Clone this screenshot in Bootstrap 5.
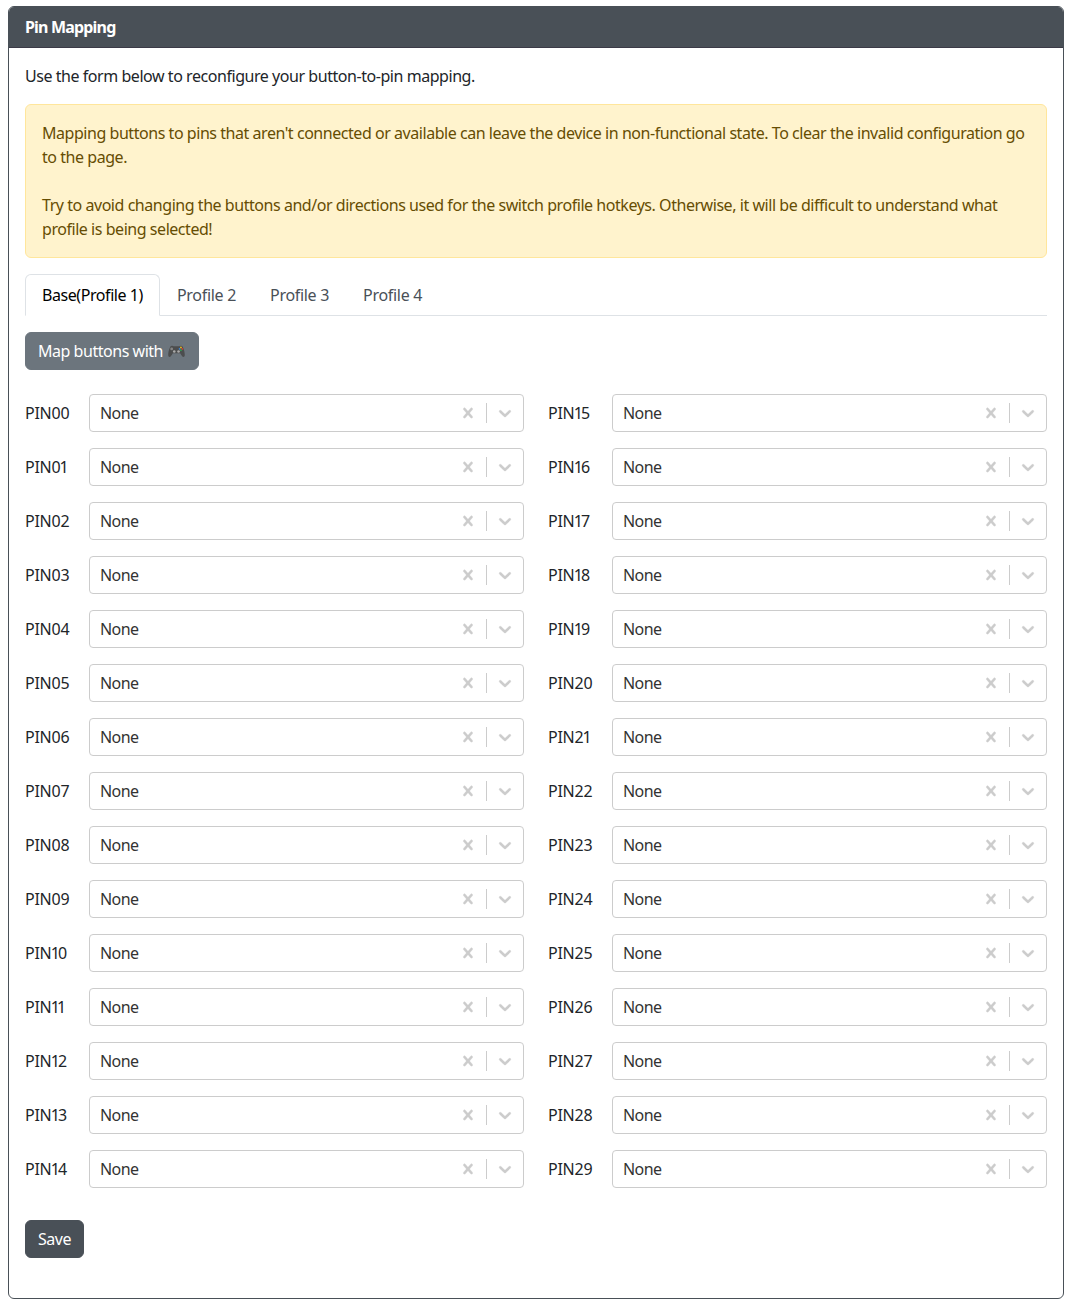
<!DOCTYPE html>
<html lang="en">
<head>
<meta charset="utf-8">
<meta name="viewport" content="width=device-width, initial-scale=1">
<title>Pin Mapping</title>
<link href="https://cdn.jsdelivr.net/npm/bootstrap@5.3.0/dist/css/bootstrap.min.css" rel="stylesheet">
<style>
  body { font-family: "Noto Sans", sans-serif; color: #212529; letter-spacing: -.45px; }
  .pin-card { margin: 6px 8px 0; height: 1293px; border-color: #495057; }
  .pin-card > .card-header { background: #495057; border-bottom-color: #3b3a47; letter-spacing: -.82px; }
  .warn-box { background: #fff3cd; border-color: #ffe69c; color: #664d03; letter-spacing: -.455px; }
  .nav-tabs .nav-link { color: #495057; letter-spacing: -.3px; }
  .nav-tabs .nav-link.active { color: #000; letter-spacing: -.43px; }
  .btn-map { --bs-btn-color: #fff; --bs-btn-bg: #6c757d; --bs-btn-border-color: #6c757d; letter-spacing: -.47px; }
  .btn-save { --bs-btn-color: #fff; --bs-btn-bg: #495057; --bs-btn-border-color: #495057; margin-top: 32px; letter-spacing: -.45px; }
  .pin-grid { display: grid; grid-template-rows: repeat(15, 38px); grid-template-columns: 1fr 1fr; grid-auto-flow: column; gap: 16px 24px; }
  .pin-label { width: 64px; letter-spacing: -.25px; }
  .digit-one { margin-left: -.9px; letter-spacing: -1.8px; }
  .pin-select { height: 38px; border: 1px solid #ccc; border-radius: 4px; color: #333; padding-left: 10px; letter-spacing: -.6px; }
  .pin-select svg { width: 20px; height: 20px; margin: 8px; fill: #ccc; stroke: #ccc; stroke-width: .3; flex: none; }
  .pin-sep { width: 1px; margin: 8px 0; background: #ccc; }
  .pad-icon { width: 19px; height: 13px; vertical-align: -1px; }
</style>
</head>
<body>
<svg class="d-none">
  <symbol id="clear" viewBox="0 0 20 20"><path d="M14.348 14.849c-0.469 0.469-1.229 0.469-1.697 0l-2.651-3.030-2.651 3.029c-0.469 0.469-1.229 0.469-1.697 0-0.469-0.469-0.469-1.229 0-1.697l2.758-3.15-2.759-3.152c-0.469-0.469-0.469-1.228 0-1.697s1.228-0.469 1.697 0l2.652 3.031 2.651-3.031c0.469-0.469 1.228-0.469 1.697 0s0.469 1.229 0 1.697l-2.758 3.152 2.758 3.15c0.469 0.469 0.469 1.229 0 1.698z"/></symbol>
  <symbol id="chevron" viewBox="0 0 20 20"><path d="M4.516 7.548c0.436-0.446 1.043-0.481 1.576 0l3.908 3.747 3.908-3.747c0.533-0.481 1.141-0.446 1.574 0 0.436 0.445 0.408 1.197 0 1.615-0.406 0.418-4.695 4.502-4.695 4.502-0.217 0.223-0.502 0.335-0.787 0.335s-0.57-0.112-0.789-0.335c0 0-4.287-4.084-4.695-4.502s-0.436-1.17 0-1.615z"/></symbol>
</svg>
<div class="card pin-card">
  <div class="card-header text-white fw-bold">Pin Mapping</div>
  <div class="card-body">
    <p class="mb-3">Use the form below to reconfigure your button-to-pin mapping.</p>
    <div class="alert warn-box mb-3" role="alert">Mapping buttons to pins that aren't connected or available can leave the device in non-functional state. To clear the invalid configuration go to the page.<br><br>Try to avoid changing the buttons and/or directions used for the switch profile hotkeys. Otherwise, it will be difficult to understand what profile is being selected!</div>
    <ul class="nav nav-tabs mb-3">
      <li class="nav-item"><a class="nav-link active" href="#">Base(Profile 1)</a></li>
      <li class="nav-item"><a class="nav-link" href="#">Profile 2</a></li>
      <li class="nav-item"><a class="nav-link" href="#">Profile 3</a></li>
      <li class="nav-item"><a class="nav-link" href="#">Profile 4</a></li>
    </ul>
    <button type="button" class="btn btn-map d-block mb-4">Map buttons with
      <svg class="pad-icon" viewBox="0 0 19 14"><path d="M3.6 1.200Q5 .2 6.400 1.300H12.600Q14 .2 15.400 1.200C17 2.500 18.600 8 18.400 11c-.2 2.300-2 2.300-3 .8L13.400 8.800H5.600L3.600 11.800c-1 1.500-2.800 1.500-3-.8C.4 8 2 2.500 3.600 1.200z" fill="#4c4d4e"/><circle cx="4.300" cy="4.200" r="1.500" fill="#858585"/><circle cx="7.100" cy="7" r="1.400" fill="#aaa"/><circle cx="11.700" cy="7" r="1.400" fill="#aaa"/><circle cx="14.300" cy="2.700" r="1" fill="#e8b820"/><circle cx="12.800" cy="4.200" r=".9" fill="#3b88d8"/><circle cx="15.800" cy="4.200" r="1" fill="#d43c32"/><circle cx="14.300" cy="5.700" r="1" fill="#2f9e55"/></svg>
    </button>
    <div class="pin-grid" id="pins"></div>
    <button type="button" class="btn btn-save d-block">Save</button>
  </div>
</div>
<script>
  const pins = document.getElementById('pins');
  for (let i = 0; i < 30; i++) {
    const digits = String(i).padStart(2, '0').replace(/1/g, '<span class="digit-one">1</span>');
    pins.insertAdjacentHTML('beforeend',
      `<div class="d-flex align-items-center"><span class="pin-label flex-shrink-0">PIN${digits}</span>
        <div class="pin-select d-flex flex-grow-1"><span class="flex-grow-1 align-self-center">None</span>
        <svg><use href="#clear"/></svg><span class="pin-sep"></span><svg><use href="#chevron"/></svg></div></div>`);
  }
</script>
<script src="https://cdn.jsdelivr.net/npm/bootstrap@5.3.0/dist/js/bootstrap.bundle.min.js"></script>
</body>
</html>
